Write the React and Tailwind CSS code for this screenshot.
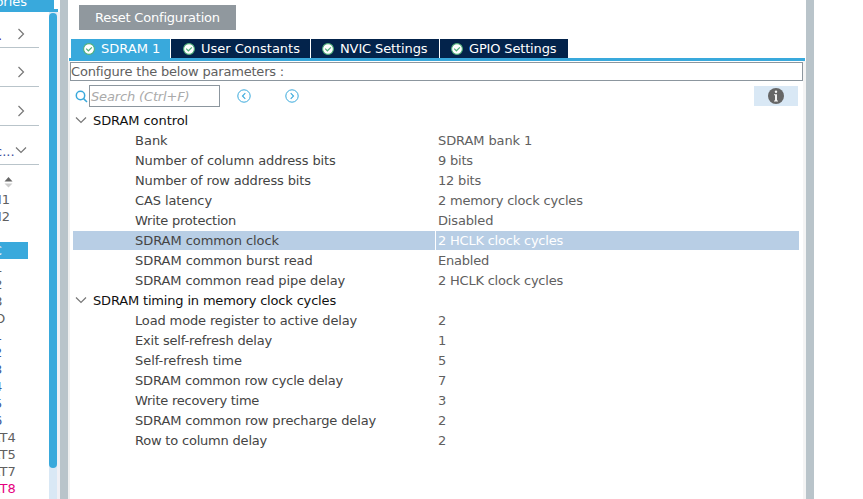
import React from "react";

const peripherals = [
  "CAN1", "CAN2", "ETH", "FMC", "I2C1", "I2C2", "I2C3", "SDIO", "SPI1",
  "SPI2", "SPI3", "SPI4", "SPI5", "SPI6", "UART4", "UART5", "UART7", "UART8",
];

const tabs = [
  { label: "SDRAM 1", cls: "w-[99px] pl-[12px] bg-[#39a9dc]" },
  { label: "User Constants", cls: "w-[139px] pl-[12px] bg-[#03234b]" },
  { label: "NVIC Settings", cls: "w-[128px] pl-[11px] bg-[#03234b] tracking-[-0.12px]" },
  { label: "GPIO Settings", cls: "w-[128px] pl-[11px] bg-[#03234b] tracking-[-0.16px]" },
];

const groups = [
  {
    title: "SDRAM control",
    tracking: "tracking-[-0.08px]",
    rows: [
      ["Bank", "SDRAM bank 1", "", "tracking-[-0.1px]"],
      ["Number of column address bits", "9 bits", "tracking-[-0.11px]", "tracking-[-0.2px]"],
      ["Number of row address bits", "12 bits", "tracking-[-0.15px]", "tracking-[-0.2px]"],
      ["CAS latency", "2 memory clock cycles", "tracking-[-0.1px]", "tracking-[-0.19px]"],
      ["Write protection", "Disabled", "tracking-[-0.24px]", "tracking-[-0.15px]"],
      ["SDRAM common clock", "2 HCLK clock cycles", "tracking-[-0.06px]", "tracking-[-0.21px]"],
      ["SDRAM common burst read", "Enabled", "tracking-[-0.05px]", "tracking-[-0.2px]"],
      ["SDRAM common read pipe delay", "2 HCLK clock cycles", "tracking-[-0.1px]", "tracking-[-0.21px]"],
    ],
  },
  {
    title: "SDRAM timing in memory clock cycles",
    tracking: "tracking-[-0.17px]",
    rows: [
      ["Load mode register to active delay", "2", "tracking-[-0.14px]", ""],
      ["Exit self-refresh delay", "1", "tracking-[-0.17px]", ""],
      ["Self-refresh time", "5", "tracking-[-0.04px]", ""],
      ["SDRAM common row cycle delay", "7", "tracking-[-0.17px]", ""],
      ["Write recovery time", "3", "tracking-[-0.25px]", ""],
      ["SDRAM common row precharge delay", "2", "tracking-[-0.13px]", ""],
      ["Row to column delay", "2", "tracking-[-0.2px]", ""],
    ],
  },
];

function Chevron({ down, className = "" }) {
  return (
    <svg width="12" height="12" viewBox="0 0 12 12" fill="none" stroke="#777" strokeWidth="1.2" className={`shrink-0 ${className}`}>
      <path d={down ? "M1 3.5 6 8.5 11 3.5" : "M3.5 1 8.5 6 3.5 11"} />
    </svg>
  );
}

function Check() {
  return (
    <svg width="12" height="12" viewBox="0 0 12 12" className="mr-[6px] shrink-0">
      <circle cx="6" cy="6" r="5.4" fill="#fff" stroke="#50b078" strokeWidth="1.1" />
      <path d="M3.2 5.6 5.4 7.8 8.9 4.4" fill="none" stroke="#50b078" strokeWidth="1.2" />
    </svg>
  );
}

function Arrow({ right }) {
  return (
    <svg width="14" height="14" viewBox="0 0 14 14" fill="none" stroke="#39a9dc" className="shrink-0">
      <circle cx="7" cy="7" r="6.2" />
      <path d={right ? "M5.7 4.2 8.5 7 5.7 9.8" : "M8.3 4.2 5.5 7 8.3 9.8"} strokeWidth="1.1" />
    </svg>
  );
}

function Section({ text, down, className }) {
  return (
    <div className={`flex w-[39px] shrink-0 items-center justify-end border-b border-[#b9c4ca] ${className}`}>
      {text && <span className={`mr-auto whitespace-nowrap ${down ? "-ml-[5px] pt-[3px] text-[#3d4f9c]" : "-ml-[2px] pt-[4px] text-[#4b1c8c]"}`}>{text}</span>}
      <Chevron down={down} className="mr-[12px]" />
    </div>
  );
}

function Sidebar() {
  return (
    <div className="flex w-[60px] shrink-0 flex-col">
      <div className="flex h-[9px] w-[54px] shrink-0 items-end overflow-hidden bg-[#39a9dc] text-white">
        <span className="-ml-[43px] -mb-[1px] whitespace-nowrap leading-[17px]">Categories</span>
      </div>
      <div className="h-[3px] w-[58px] shrink-0 bg-[#39a9dc]" />
      <div className="flex h-[487px]">
        <div className="flex w-[49px] flex-col overflow-hidden">
          <Section text="." className="h-[36px] pt-[8px]" />
          <Section className="h-[39px] pt-[10px]" />
          <Section className="h-[39px] pt-[10px]" />
          <Section text="c..." down className="h-[39px] pt-[10px]" />
          <div className="flex h-[26px] shrink-0 items-center pt-[8px] pl-[4px]">
            <svg width="9" height="11" viewBox="0 0 9 11">
              <path d="M0.5 4.5 4.5 0 8.5 4.5Z" fill="#666" />
              <path d="M0.5 6.5 4.5 10.5 8.5 6.5Z" fill="#ccc" />
            </svg>
          </div>
          {peripherals.map((name) => (
            <div
              key={name}
              className={`h-[17px] w-[28px] shrink-0 whitespace-nowrap leading-[17px] ${name === "FMC" ? "bg-[#39a9dc] text-white" : name === "UART8" ? "text-[#e6007e]" : "text-[#606060]"}`}
            >
              <span
                className={
                  name.startsWith("SPI")
                    ? "-ml-[26px] text-[#3d5a9c]"
                    : name.startsWith("CAN") || name === "FMC"
                      ? "-ml-[26px]"
                      : "-ml-[27px]"
                }
              >
                {name}
              </span>
            </div>
          ))}
        </div>
        <div className="w-[8px] bg-[#d9e8f5] pt-[1px]">
          <div className="h-[455px] rounded-[4px] bg-[#39a9dc]" />
        </div>
        <div className="w-[3px] bg-[#f0f0f5]" />
      </div>
    </div>
  );
}

function Group({ title, tracking, rows }) {
  return (
    <div>
      <div className={`flex h-[20px] items-center pl-[2px] text-[#111] ${tracking}`}>
        <Chevron down className="mr-[6px]" />
        <span className="pt-[1px]">{title}</span>
      </div>
      {rows.map(([name, value, nameTracking, valueTracking]) => {
        const selected = name === "SDRAM common clock";
        return (
          <div key={name} className="flex h-[20px] pt-[1px] leading-[19px]">
            <div className={`mr-[1px] w-[362px] pl-[62px] text-[#444] ${nameTracking} ${selected ? "bg-[#b8cee5]" : ""}`}>{name}</div>
            <div className={`w-[363px] pl-[2px] ${valueTracking} ${selected ? "bg-[#b8cee5] text-white" : "text-[#606060]"}`}>{value}</div>
          </div>
        );
      })}
    </div>
  );
}

export default function App() {
  return (
    <div className="flex h-[499px] w-[863px] overflow-hidden bg-white font-['DejaVu_Sans',sans-serif] text-[13px]">
      <Sidebar />
      <div className="w-[8px] shrink-0 bg-[#b9c4ca]" />
      <div className="flex w-[738px] shrink-0 flex-col">
        <div className="mt-[5px] ml-[11px] flex h-[25px] w-[157px] items-center justify-center bg-[#90989e] tracking-[-0.2px] text-white">Reset Configuration</div>
        <div className="mt-[9px] ml-[3px] flex gap-[1px]">
          {tabs.map(({ label, cls }) => (
            <div key={label} className={`flex h-[19px] items-center whitespace-nowrap text-white ${cls}`}>
              <Check />
              {label}
            </div>
          ))}
        </div>
        <div className="ml-[1px] h-[3px] w-[736px] bg-[#39a9dc]" />
        <div className="flex h-[438px]">
          <div className="w-[2px] bg-[#f0f0f0]" />
          <div className="w-[733px] pt-[1px]">
            <div className="h-[19px] border border-[#8c969e] leading-[18px] tracking-[-0.19px] text-[#606060]">Configure the below parameters :</div>
            <div className="mt-[4px] flex h-[22px] items-center pl-[5px]">
              <svg width="13" height="13" viewBox="0 0 13 13" fill="none" stroke="#39a9dc" strokeWidth="1.5" className="mr-[1px] shrink-0">
                <circle cx="5.5" cy="5.5" r="4.2" />
                <path d="M8.6 8.6 12 12" />
              </svg>
              <div className="h-[22px] w-[131px] border border-[#8c969e] pl-[1px] leading-[21px] tracking-[-0.15px] text-[#aaa] italic">Search (Ctrl+F)</div>
              <div className="ml-[17px] flex gap-[34px]">
                <Arrow />
                <Arrow right />
              </div>
              <div className="mr-[5px] ml-auto flex h-[20px] w-[44px] items-center justify-center bg-[#d9e8f5]">
                <svg width="16" height="16" viewBox="0 0 16 16">
                  <circle cx="8" cy="8" r="8" fill="#666" />
                  <circle cx="8" cy="3.8" r="1.2" fill="#f4f4f4" />
                  <path d="M6 6.2H9V12.5H10V13.5H6V12.5H7V7.2H6Z" fill="#f4f4f4" />
                </svg>
              </div>
            </div>
            <div className="mt-[3px] ml-[3px]">
              {groups.map((group) => (
                <Group key={group.title} {...group} />
              ))}
            </div>
          </div>
          <div className="w-[3px] bg-[#f4f4f4]" />
        </div>
      </div>
      <div className="w-[8px] shrink-0 bg-[#b9c4ca]" />
    </div>
  );
}
